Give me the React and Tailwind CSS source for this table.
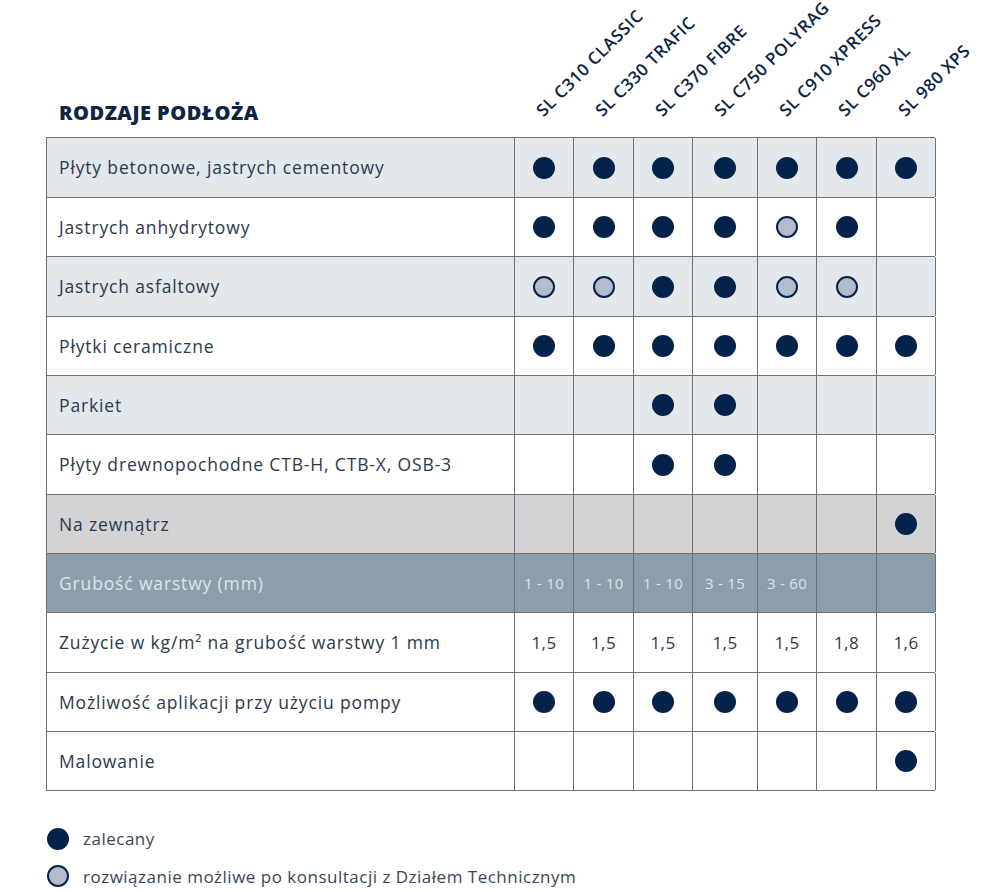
const NAVY = "bg-[#05224a]";

const products = [
  "SL C310 CLASSIC",
  "SL C330 TRAFIC",
  "SL C370 FIBRE",
  "SL C750 POLYRAG",
  "SL C910 XPRESS",
  "SL C960 XL",
  "SL 980 XPS",
];

const colWidths = ["w-[59px]", "w-[60px]", "w-[59px]", "w-[65px]", "w-[59px]", "w-[60px]", "w-[59px]"];

// F = zalecany, L = po konsultacji, "" = brak, reszta to tekst
const rows = [
  { label: "Płyty betonowe, jastrych cementowy", bg: "bg-[#e3e8ec]", h: "h-[60px]", cells: ["F", "F", "F", "F", "F", "F", "F"] },
  { label: "Jastrych anhydrytowy", bg: "bg-white", h: "h-[59px]", cells: ["F", "F", "F", "F", "L", "F", ""] },
  { label: "Jastrych asfaltowy", bg: "bg-[#e3e8ec]", h: "h-[60px]", cells: ["L", "L", "F", "F", "L", "L", ""] },
  { label: "Płytki ceramiczne", bg: "bg-white", h: "h-[59px]", cells: ["F", "F", "F", "F", "F", "F", "F"] },
  { label: "Parkiet", bg: "bg-[#e3e8ec]", h: "h-[59px]", cells: ["", "", "F", "F", "", "", ""] },
  { label: "Płyty drewnopochodne CTB-H, CTB-X, OSB-3", bg: "bg-white", h: "h-[60px]", cells: ["", "", "F", "F", "", "", ""] },
  { label: "Na zewnątrz", bg: "bg-[#d1d3d5]", h: "h-[59px]", cells: ["", "", "", "", "", "", "F"] },
  { label: "Grubość warstwy (mm)", bg: "bg-[#8b9ea9]", h: "h-[59px]", dark: true, cells: ["1 - 10", "1 - 10", "1 - 10", "3 - 15", "3 - 60", "", ""] },
  { label: "Zużycie w kg/m² na grubość warstwy 1 mm", bg: "bg-white", h: "h-[60px]", cells: ["1,5", "1,5", "1,5", "1,5", "1,5", "1,8", "1,6"] },
  { label: "Możliwość aplikacji przy użyciu pompy", bg: "bg-white", h: "h-[59px]", cells: ["F", "F", "F", "F", "F", "F", "F"] },
  { label: "Malowanie", bg: "bg-white", h: "h-[59px]", cells: ["", "", "", "", "", "", "F"] },
];

function Dot({ kind }) {
  if (kind === "F") return <span className={`block w-[22px] h-[22px] rounded-full ${NAVY}`} />;
  return <span className="block w-[22px] h-[22px] rounded-full bg-[#b3bccd] border-[2.5px] border-[#05224a]" />;
}

function Cell({ value, dark, width }) {
  let content = null;
  if (value === "F" || value === "L") content = <Dot kind={value} />;
  else if (value)
    content = (
      <span className={dark ? "text-[15px] tracking-[0.3px] text-[#dfe5ea]" : "text-[17px] tracking-[0.4px] text-[#2b3a4d]"}>
        {value}
      </span>
    );
  return (
    <div className={`${width} shrink-0 flex items-center justify-center border-r border-[#6f7174]`}>{content}</div>
  );
}

export default function App() {
  return (
    <div className="w-[1000px] h-[892px] bg-white pl-[46px] font-['Open_Sans',sans-serif]">
      <div className="flex items-end h-[137px]">
        <div className="w-[468px] shrink-0 pl-[13px] pb-[9px]">
          <h1 className="text-[20px] font-extrabold text-[#0d2443] tracking-[0.5px]">RODZAJE PODŁOŻA</h1>
        </div>
        {products.map((p, i) => (
          <div key={p} className={`${colWidths[i]} shrink-0 h-full flex items-end pl-[31px] pb-[18px]`}>
            <span className="block whitespace-nowrap origin-bottom-left -rotate-45 text-[17px] font-semibold tracking-[0.6px] text-[#0d2443] leading-none">
              {p}
            </span>
          </div>
        ))}
      </div>

      <div className="w-[889px] border-t border-l border-[#6f7174]">
        {rows.map((r) => (
          <div key={r.label} className={`flex ${r.h} ${r.bg} border-b border-[#6f7174]`}>
            <div
              className={`w-[468px] shrink-0 flex items-center pl-[12px] border-r border-[#6f7174] text-[17.5px] tracking-[0.85px] ${
                r.dark ? "text-[#dfe5ea]" : "text-[#2b3a4d]"
              }`}
            >
              {r.label}
            </div>
            {r.cells.map((c, i) => (
              <Cell key={i} value={c} dark={r.dark} width={colWidths[i]} />
            ))}
          </div>
        ))}
      </div>

      <div className="mt-[35px] flex flex-col gap-[12px] text-[17px] tracking-[0.5px] text-[#3a4657]">
        <div className="flex items-center gap-[14px] pl-px">
          <Dot kind="F" />
          <span>zalecany</span>
        </div>
        <div className="flex items-center gap-[14px] pl-px">
          <Dot kind="L" />
          <span>rozwiązanie możliwe po konsultacji z Działem Technicznym</span>
        </div>
      </div>
    </div>
  );
}
